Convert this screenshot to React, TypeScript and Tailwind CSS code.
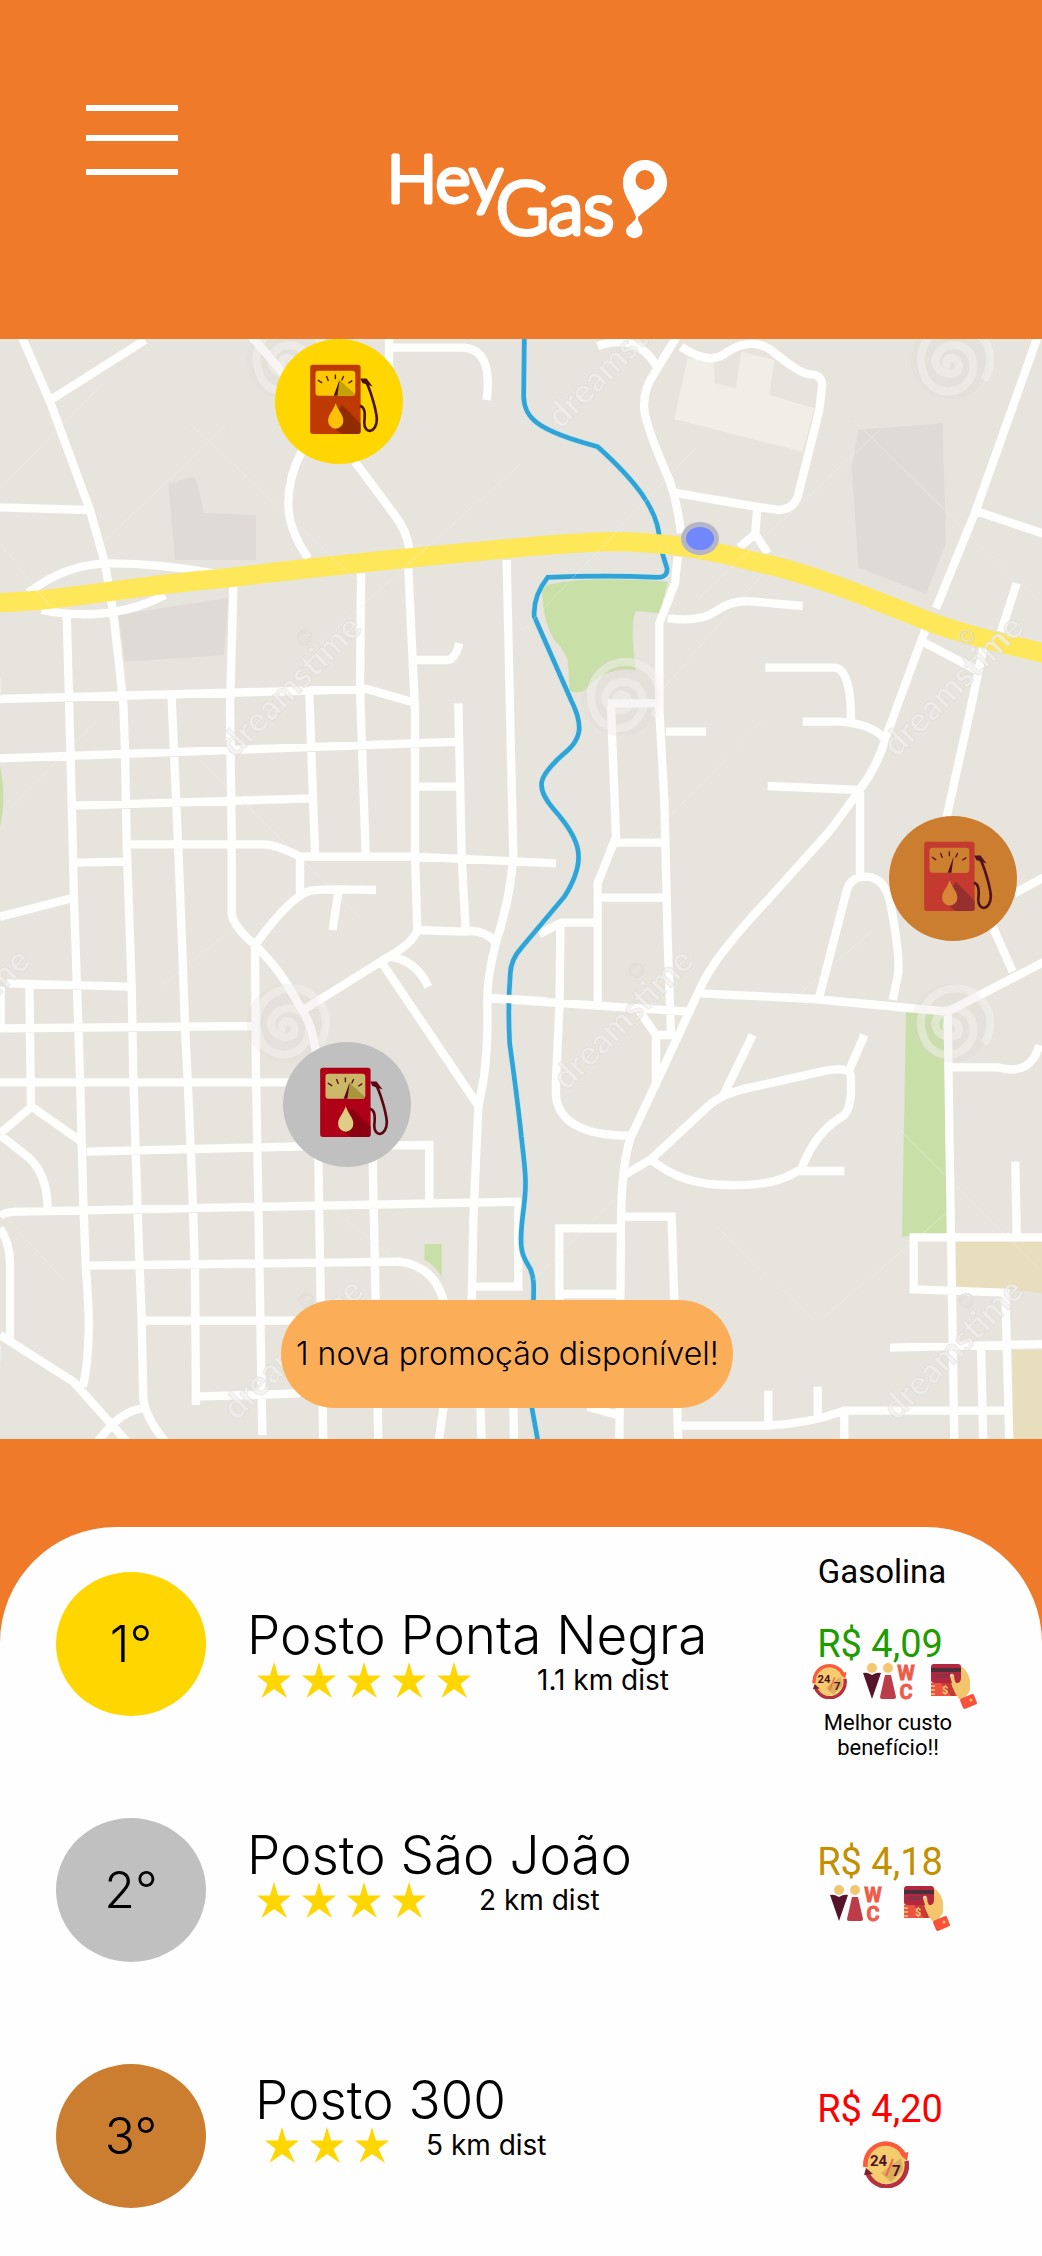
import type { ReactNode } from "react";

type PumpColors = { body: string; shade: string; screen: string; screenShade: string; drop: string; ink: string };

const pumpGold: PumpColors = { body: "#bf3a00", shade: "#8f2c00", screen: "#fbc800", screenShade: "#c4a200", drop: "#fcc107", ink: "#4a1400" };
const pumpSilver: PumpColors = { body: "#b00018", shade: "#8a0010", screen: "#cbb768", screenShade: "#a9963c", drop: "#e0cd84", ink: "#5c0610" };
const pumpBronze: PumpColors = { body: "#c43a2f", shade: "#96302f", screen: "#cd8030", screenShade: "#cd8030", drop: "#d98536", ink: "#4d1420" };

function Pump({ c }: { c: PumpColors }) {
  return (
    <svg viewBox="105 70 210 214" className="h-[71px] w-[70px]" aria-hidden="true">
      <rect x="105" y="72" width="152" height="209" rx="8" fill={c.body} />
      <path d="M200 192 L257 250 V273 Q257 281 249 281 H200 L168 256 Z" fill={c.shade} />
      <rect x="121" y="90" width="120" height="76" rx="9" fill={c.screen} />
      <path d="M193 118 L240 160 Q238 166 232 166 H182 Z" fill={c.screenShade} />
      <path d="M128 118 L141 127 M154 106 L160 121 M181 102 V116 M206 106 L200 120 M232 120 L220 128" stroke={c.ink} strokeWidth="4" fill="none" />
      <path d="M194 116 L187 166 H176 Z" fill={c.ink} />
      <path d="M182 188 C190 212 205 222 205 241 A23 24 0 0 1 159 241 C159 222 174 212 182 188 Z" fill={c.drop} />
      <path d="M256 114 L275 114 L293 138 L262 127 Z" fill={c.ink} />
      <path d="M272 122 C284 140 304 205 306 236 C306 278 268 284 268 246 C272 212 268 200 255 196" stroke={c.ink} strokeWidth="8" fill="none" />
    </svg>
  );
}

function Pin({ place, label, c }: { place: string; label: string; c: PumpColors }) {
  return (
    <button type="button" aria-label={label} className={"absolute flex h-[125px] w-32 items-center justify-center rounded-[50%] pb-1 " + place}>
      <Pump c={c} />
    </button>
  );
}

const roads =
  "M65 20 L150 215 L270 540 L315 700 L340 850 L370 1120 L375 1260 L380 1540 L395 1970 L400 2240 L412 2620 L425 2970 L430 3210 Q440 3270 500 3340" +
  "M435 30 L155 208 M0 532 L265 540 M85 788 Q200 700 330 700 Q480 700 640 730 M125 840 Q330 880 495 795" +
  "M200 850 L208 1140 L215 1410 L222 1710 L235 2090 L240 2240 L250 2620 L258 2820 Q268 2950 266 3000 Q264 3110 248 3170" +
  "M700 770 L690 1140 L695 1500 V1750 Q700 1790 765 1845 L768 2240 L775 2620 L787 3315" +
  "M1083 730 L1080 1080 L1097 1570 M1225 715 L1245 1140 L1245 1580 L1252 1800 Q1240 1840 1150 1890 L910 2040" +
  "M1520 690 L1530 1140 L1540 1580 Q1530 1710 1490 1830 Q1460 1940 1462 2020 Q1465 2140 1452 2240 L1435 2330 L1420 2670 L1415 2920" +
  "M1245 990 H1345 Q1367 985 1378 940 M0 1107 L1100 1077 L1250 1120" +
  "M905 365 Q865 440 865 520 Q865 600 925 685 M1065 395 L1180 550 Q1220 600 1228 655 M755 20 L850 130 M1167 20 V110 M1167 53 H1390 Q1480 58 1460 210" +
  "M515 1105 L535 1560 L545 1810 L555 2090 L563 2250 L575 2520 L585 2820 L588 3225 M928 1095 L945 1570 M1375 1120 L1385 1580 L1397 1800" +
  "M0 1285 L1385 1235 M220 1427 L940 1405 M385 1543 H790 Q830 1543 900 1580 H1240 L1668 1600 M1250 1370 H1385 M225 1598 L375 1595 M0 1760 L215 1705" +
  "M900 1580 V1690 M765 1845 Q870 1700 930 1682 Q980 1675 1128 1680 M1015 1685 L998 1800 M1250 1800 L1390 1805 Q1450 1795 1488 1838" +
  "M765 1845 C850 1930 870 1980 900 2030 C935 2080 940 2120 950 2180 M1175 1880 Q1250 1895 1285 1970 M1140 1890 L1440 2335" +
  "M20 1960 L385 1970 M2 1970 V2095 M88 1970 L93 2330 M0 2095 L765 2088 M0 2257 H880" +
  "M0 2410 L95 2330 L240 2432 M0 2415 L70 2470 Q143 2520 143 2640 M0 2660 Q10 2645 60 2645 L1563 2615 M260 2465 L950 2448 L1288 2445 V2630" +
  "M1555 2615 V2870 H1420 M0 2695 Q30 2740 30 2800 V3025 M0 3015 L220 3155 L385 3340 M290 3340 Q360 3240 430 3235" +
  "M270 2807 L1200 2795 Q1310 2810 1335 2930 M435 2972 H900 M580 3200 L900 3190 M955 2480 L962 2920 L970 3340 M1118 2480 L1127 2920 L1135 3340" +
  "M1335 3200 L1315 3340 M1440 3200 L1445 3340 M1540 3200 L1542 3340";

const roadsEast =
  "M230 48 Q350 5 410 115 M470 15 L400 130 Q365 180 370 240 Q375 290 445 450 Q470 520 480 610 M470 680 L462 760 L415 880 V1140 L430 1410 L440 1830 L450 2110" +
  "M480 50 Q570 110 620 65 Q690 20 750 60 Q840 135 870 133 Q905 135 903 170 L895 240 L830 500 Q815 540 770 540 Q700 530 460 488" +
  "M708 540 L703 612 L655 652 M703 612 L740 670 M1550 20 L1365 540 L1245 835 M1220 880 L1095 1220 Q1070 1310 1015 1380 Q960 1460 920 1510 L740 1710 Q580 1880 540 1970 L410 2250 L330 2420 Q302 2500 300 2670 L295 3340" +
  "M1370 545 L1570 612 M1487 760 L1440 905 M1390 940 L1350 1130 L1275 1470 M1210 938 L1370 1022" +
  "M440 865 Q540 878 590 840 Q635 808 700 815 L845 828 M733 1013 H940 Q990 1015 990 1170" +
  "M260 1120 H410 M270 1130 L285 1520 L230 1660 V2015 M435 1205 H555 M285 1538 H430 M235 1703 H435 M55 1813 L120 1778 H225 M118 1785 L116 2015 L105 2250 V2300 Q120 2417 330 2417" +
  "M845 1175 H950 Q1050 1180 1090 1225 M740 1368 L1015 1380 M1017 1385 V1635 M895 2000 L975 1690 Q985 1640 1035 1640 Q1095 1642 1110 1730 Q1140 1890 1130 1940 L1115 2010" +
  "M-95 2005 L500 2045 M540 1990 L880 2007 L1280 2045 L1570 1895 M1480 1690 L1570 1642 M1415 1790 L1475 1925 M1280 2045 L1285 2400 L1290 2720 L1300 3340 M1290 2212 H1430 Q1530 2240 1555 2145" +
  "M350 2035 L405 2115 H460 M405 2110 V2270 M695 2115 L605 2300 M1030 2115 L985 2220 M315 2532 L390 2488 L560 2330 Q600 2290 700 2270 L900 2225 Q990 2205 990 2240 V2290 Q985 2350 960 2362 Q880 2410 840 2520" +
  "M390 2488 Q480 2565 620 2565 Q760 2570 830 2523 H970 M300 2660 H452 L460 2920 L472 3340 M300 2695 H115 V2920 M115 2892 H290" +
  "M1570 2722 H1178 V2878 L1453 2888 L1465 3340 M1483 2495 L1487 2720 M1107 3053 L1570 3042 M1380 3050 L1387 3340 M200 3230 L290 3255 M475 3287 H740 Q860 3282 970 3242 H1465 M742 3182 V3285 M890 3170 V3265 M970 3240 V3340";

const river =
  "M1573 20 L1571 200 C1573 260 1603 300 1793 350 C1893 440 1983 540 1978 640 L2001 715 Q2003 742 1973 742 Q1813 735 1643 742 Q1598 800 1603 860 L1713 1110" +
  "C1753 1190 1743 1230 1693 1270 C1613 1340 1603 1370 1663 1440 C1743 1530 1763 1590 1693 1700 L1563 1855 Q1533 1888 1531 1930 C1525 2000 1526 2080 1529 2140 C1540 2220 1555 2330 1564 2420 C1580 2550 1580 2570 1568 2660 C1555 2770 1570 2780 1590 2815 C1606 2850 1600 2880 1600 2940 L1596 3235 L1615 3340";

const marks = [[1683, 300], [705, 1285], [2690, 1285], [1700, 2285], [710, 3275], [2690, 3275], [-290, 2285]];
const swirls = [[858, 90], [2851, 90], [1861, 1100], [858, 2080], [2851, 2080], [-127, 1070], [-127, 3070]];

function MapCanvas() {
  return (
    <svg viewBox="0 27 3126 3300" className="block h-full w-full" role="img" aria-label="Mapa dos postos">
      <rect x="0" y="0" width="3126" height="3400" fill="#e6e4dd" />
      <g fill="#dfdad5">
        <path d="M505 460 L580 440 Q590 442 594 470 L612 548 L768 555 V690 H525 Z" />
        <path d="M355 855 L685 803 L672 975 L375 995 Z" />
        <path d="M2575 300 L2828 280 L2838 640 L2778 792 L2575 712 L2555 410 Z" />
      </g>
      <path d="M2063 85 L2143 95 V160 L2208 175 L2223 65 L2323 90 L2308 195 L2443 235 L2408 365 L2023 268 Z" fill="#f1eee7" />
      <g fill="#c9dfa8">
        <path d="M1628 770 Q1723 735 2003 755 L1980 850 L1908 843 Q1888 880 1908 1020 Q1813 1010 1755 1080 Q1730 1095 1708 1080 Q1706 1010 1703 990 Q1693 960 1663 930 Q1623 860 1628 770 Z" />
        <path d="M2718 2045 L2831 2050 L2843 2710 L2706 2720 Z" />
        <path d="M1273 2742 H1325 V2840 Q1300 2800 1273 2790 Z" />
        <ellipse cx="-12" cy="1400" rx="22" ry="105" />
      </g>
      <g fill="#e8ddbc">
        <path d="M2868 2735 H3126 V2890 L3030 2878 L2868 2870 Z" />
        <path d="M3038 3060 H3126 V3340 H3038 Z" />
      </g>
      <g fill="none" stroke="#fefefd" strokeWidth="25">
        <path d={roads} />
        <path d={roadsEast} transform="translate(1563 0)" />
      </g>
      <path d={river} fill="none" stroke="#bfe4f0" strokeWidth="19" strokeOpacity="0.6" />
      <path d={river} fill="none" stroke="#30a4d6" strokeWidth="14" />
      <path d="M1460 2003 L1640 2014" stroke="#fefefd" strokeWidth="25" />
      <path d="M-10 818 C200 812 380 770 660 746 C860 722 1100 696 1230 684 C1400 668 1700 635 1833 635 C2000 635 2130 660 2263 695 C2420 725 2600 800 2800 880 C2960 935 3040 945 3140 972" fill="none" stroke="#fee759" strokeWidth="58" />
      <g fill="none" stroke="#f6f3f0" strokeWidth="3" strokeOpacity="0.4">
        <path d="M0 475 L310 160 M290 655 L680 285 M570 280 L1080 760 M960 940 L1563 400 M0 640 L150 830 M1840 1250 L2290 730 M2560 270 L3120 820 M2100 800 L2640 300 M1570 900 L2100 340" />
        <path d="M10 1460 L290 1170 M600 1290 L1080 1760 M480 1970 L680 1810 M1940 1530 L2290 1170 M2400 1990 L2620 1800 M1000 2640 L1400 2960 M0 2640 L190 2850 M1600 2850 L1860 2590 M2450 2980 L2850 2640 M2700 2400 L3120 2820 M2150 2690 L2440 2970" />
      </g>
      <g fill="none" strokeWidth="24">
        {swirls.map(([x, y]) => (
          <g key={x + "-" + y} transform={"translate(" + x + " " + y + ")"}>
            <circle r="118" stroke="none" fill="#d8d3cf" fillOpacity="0.18" />
            <path stroke="#f8f6f5" strokeOpacity="0.45" d="M-2 22 A14 14 0 0 1 8 -6 A28 28 0 0 1 22 34 A44 44 0 0 1 -46 0 A58 58 0 0 1 66 -4 A76 76 0 0 1 -80 40 A104 104 0 1 1 100 60" />
          </g>
        ))}
      </g>
      <g fill="#f3f0ed" fillOpacity="0.7" stroke="#d2cecb" strokeOpacity="0.5" strokeWidth="2" fontFamily="Lato, sans-serif" fontWeight="700" fontSize="104">
        {marks.map(([x, y]) => (
          <g key={x + "-" + y} transform={"translate(" + x + " " + y + ") rotate(-45)"}>
            <text>dreamstime</text>
            <text x="380" y="-88" fontSize="60" fontWeight="400">©</text>
          </g>
        ))}
      </g>
    </svg>
  );
}

function Logo() {
  return (
    <svg viewBox="371 125 300 140" className="h-[140px] w-[300px] overflow-visible" role="img" aria-label="HeyGas">
      <g fill="#fff" stroke="#fff" strokeWidth="5" strokeLinejoin="round" fontFamily="Lato, sans-serif" fontWeight="300">
        <text x="387" y="202" fontSize="66">Hey</text>
        <text x="496" y="234" fontSize="72">Gas</text>
      </g>
      <path fillRule="evenodd" fill="#fff" d="M645 160 C658 160 667 170 667 183 C667 196 656 202 638 217 C637 222 642.500 225 642.500 231 A8 7 0 0 1 626 231 C626 225 636 222 636 217 C631 202 623 196 623 183 C623 170 632 160 645 160 Z M645 170 A9.500 10 0 1 0 645 190 A9.500 10 0 1 0 645 170 Z" />
    </svg>
  );
}

function Clock247({ size }: { size: string }) {
  return (
    <svg viewBox="0 0 46 48" className={size} role="img" aria-label="Aberto 24 horas, 7 dias">
      <circle cx="23" cy="24" r="20" fill="#f5cc6e" />
      <path d="M18 33 L38 18 L40 30 L28 42 Z" fill="#d9ae5c" />
      <path d="M2.500 27 A20.500 21 0 0 1 42 17" fill="none" stroke="#fb5a3c" strokeWidth="4.500" />
      <path d="M43.500 21 A20.500 21 0 0 1 4 32" fill="none" stroke="#b7303f" strokeWidth="4.500" />
      <path d="M37 14 L45.500 12 L44 21 Z" fill="#fb5a3c" />
      <path d="M1 35 L3 28 L10 34 Z" fill="#7a1f30" />
      <g fontFamily="Roboto, sans-serif" fontWeight="700" fontSize="15" fill="#52122a">
        <text x="7" y="26">24</text>
        <text x="29" y="36">7</text>
      </g>
      <path d="M23 36 L30 19" stroke="#f4664a" strokeWidth="2" />
    </svg>
  );
}

function Restroom() {
  return (
    <svg viewBox="0 0 52 37" className="h-[37px] w-[52px] overflow-visible" role="img" aria-label="Banheiros">
      <circle cx="9" cy="5" r="5" fill="#f3c670" />
      <circle cx="25" cy="5" r="5" fill="#f3c670" />
      <path d="M0 10 Q4 9 9 12 Q14 9 18 10 L9 36 Z" fill="#56142a" />
      <path d="M22 12 H28 L33 34 Q33 36 31 36 H19 Q17 36 17 34 Z" fill="#bd3c49" />
      <g fontFamily="Roboto, sans-serif" fontWeight="700" fontSize="20" fill="#ef5b49" stroke="#ef5b49" strokeWidth="0.800">
        <text x="43" y="17" textAnchor="middle">W</text>
        <text x="43" y="36" textAnchor="middle">C</text>
      </g>
    </svg>
  );
}

function CardPay() {
  return (
    <svg viewBox="0 0 46 47" className="h-[47px] w-[46px]" role="img" aria-label="Aceita cartão">
      <rect x="0" y="20" width="30" height="13" fill="#ee5342" />
      <path d="M10 20 H24 V33 H20 Z" fill="#c53a35" />
      <path d="M0 23 H4 M0 27 H4 M0 31 H4" stroke="#f5c970" strokeWidth="1.500" />
      <text x="11" y="31" fontFamily="Roboto, sans-serif" fontWeight="700" fontSize="11" fill="#f5c970">$</text>
      <path d="M30 3 Q37 8 39 17 V28 L33 36 L28 36 Q23 29 21 23 L19 14 Z" fill="#f3c66e" />
      <path d="M3 1 H27 Q30 1 30 4 V15 Q30 19 27 20 H25 Q23 17 23 12 Q20 9 19 13 L21 20 H3 Q0 20 0 17 V4 Q0 1 3 1 Z" fill="#b3283f" />
      <path d="M0 5 H30 V9 H0 Z" fill="#4a3038" />
      <path d="M4 11 H18 V15 H4 Z" fill="#8d3345" />
      <rect x="30" y="33" width="15" height="11" rx="2" fill="#fb5039" transform="rotate(-22 37.500 38.500)" />
      <circle cx="40" cy="37" r="1.500" fill="#f5c970" />
    </svg>
  );
}

function Stars({ count }: { count: number }) {
  return (
    <div className="flex gap-[11px]" role="img" aria-label={count + " estrelas"}>
      {Array.from({ length: count }, (_, i) => (
        <svg key={i} viewBox="0 0 34 36" className="h-9 w-[34px]" aria-hidden="true">
          <path fill="#ffd600" d="M17 0 L21 13.500 H34 L23.500 22 L30 36 L17 27 L4.500 36 L10.500 22 L0 13.500 H13 Z" />
        </svg>
      ))}
    </div>
  );
}

type Station = {
  rank: string; name: string; stars: number; dist: string; price: string;
  badge: string; info: string; meta: string; side: string; priceColor: string; iconsRow: string; icons: ReactNode;
  fuel?: string; note?: string;
};

const stations: Station[] = [
  {
    rank: "1°", name: "Posto Ponta Negra", stars: 5, dist: "1.1 km dist", price: "R$ 4,09", fuel: "Gasolina", note: "Melhor custo benefício!!",
    badge: "bg-[#ffd600]", info: "pt-[57px] pl-[41px]", meta: "gap-[66px]", side: "pt-px", priceColor: "mt-[33px] text-[#1f9d00]", iconsRow: "items-start gap-4 pl-3",
    icons: <><Clock247 size="h-9 w-[35px]" /><Restroom /><CardPay /></>,
  },
  {
    rank: "2°", name: "Posto São João", stars: 4, dist: "2 km dist", price: "R$ 4,18",
    badge: "bg-[#c0c0c0]", info: "pt-[31px] pl-[41px]", meta: "gap-[53px]", side: "pt-[46px]", priceColor: "text-[#c39000]", iconsRow: "items-start gap-[22px] pt-1 pl-1",
    icons: <><Restroom /><CardPay /></>,
  },
  {
    rank: "3°", name: "Posto 300", stars: 3, dist: "5 km dist", price: "R$ 4,20",
    badge: "bg-[#cc7e30]", info: "pt-[30px] pl-[49px]", meta: "gap-[37px]", side: "pt-[47px]", priceColor: "text-[#ff0000]", iconsRow: "pt-3 pr-1",
    icons: <Clock247 size="h-12 w-[46px]" />,
  },
];

function StationRow({ s }: { s: Station }) {
  return (
    <li className="flex min-h-[246px] items-start">
      <div className={"mt-[21px] flex h-36 w-[150px] shrink-0 items-center justify-center rounded-[50%] text-[50px] font-light " + s.badge}>{s.rank}</div>
      <div className={"min-w-0 flex-1 " + s.info}>
        <h2 className="text-[53px] leading-[54px] font-light whitespace-nowrap">{s.name}</h2>
        <div className={"flex items-center pl-[10px] " + s.meta}>
          <Stars count={s.stars} />
          <span className="text-[28px] leading-9 whitespace-nowrap">{s.dist}</span>
        </div>
      </div>
      <div className={"flex w-[168px] shrink-0 flex-col items-center font-[Roboto,sans-serif] " + s.side}>
        {s.fuel && <span className="pr-3 text-[33px] leading-10">{s.fuel}</span>}
        <span className={"pr-4 text-[38px] leading-[38px] whitespace-nowrap " + s.priceColor}>{s.price}</span>
        <div className={"flex justify-center " + s.iconsRow}>{s.icons}</div>
        {s.note && <p className="w-[148px] text-center text-[22px] leading-[25px]">{s.note}</p>}
      </div>
    </li>
  );
}

export default function App() {
  return (
    <div className="min-h-screen w-full bg-[#ef7b2a] font-[Inter,sans-serif] text-black">
      <header className="grid min-h-[339px] grid-cols-[1fr_auto_1fr] items-start px-[86px] pt-[105px]">
        <button type="button" aria-label="Abrir menu" className="flex w-[92px] flex-col">
          <span className="h-1.5 w-full bg-white" />
          <span className="mt-6 h-1.5 w-full bg-white" />
          <span className="mt-7 h-1.5 w-full bg-white" />
        </button>
        <h1 className="pt-5"><Logo /></h1>
      </header>

      <section className="relative aspect-[1042/1100] w-full overflow-hidden">
        <MapCanvas />
        <Pin place="top-0 left-[26.400%] bg-[#ffd600] pl-3" label="Posto Ponta Negra" c={pumpGold} />
        <Pin place="top-[63.900%] left-[27.200%] bg-[#c0c0c0] pl-4" label="Posto São João" c={pumpSilver} />
        <Pin place="top-[43.400%] left-[85.300%] bg-[#cc7e30] pl-3" label="Posto 300" c={pumpBronze} />
        <div className="absolute top-[16.600%] left-[65.400%] h-[33px] w-[38px] rounded-[50%] border-[5px] border-[#b4b5c9] bg-[#7088fb]" />
        <button type="button" className="absolute bottom-[31px] left-[27%] h-[108px] w-[452px] rounded-full bg-[#fbae57] text-[32px] font-light whitespace-nowrap">
          1 nova promoção disponível!
        </button>
      </section>

      <main className="mt-[88px] rounded-t-[116px] bg-[#fffefe] pt-6 pr-[70px] pl-14">
        <ol>
          {stations.map((s) => <StationRow key={s.rank} s={s} />)}
        </ol>
      </main>
    </div>
  );
}
